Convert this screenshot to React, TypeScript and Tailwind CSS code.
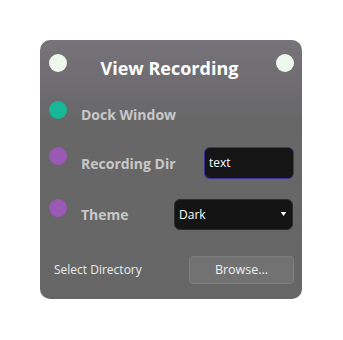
import React from 'react';

const font = { fontFamily: '"Open Sans", "Noto Sans", sans-serif' };

const Dot: React.FC<{ color: string }> = ({ color }) => (
  <div className={`w-[18px] h-[18px] rounded-full shrink-0 ${color}`} />
);

const App: React.FC = () => {
  return (
    <div className="w-[343px] h-[340px] bg-white pt-[40px] pl-[40px]" style={font}>
      <div className="w-[262px] h-[259px] rounded-[10px] bg-[linear-gradient(to_bottom,#76737a_0%,#686768_30%,#666666_100%)] pt-[14px] pl-[9px] pr-[8px] flex flex-col">
        {/* Header */}
        <div className="flex items-start">
          <Dot color="bg-[#eef8ec]" />
          <h1 className="flex-1 text-center text-white font-bold text-[18px] leading-[28px] pr-[4px]">View Recording</h1>
          <Dot color="bg-[#eef8ec]" />
        </div>

        {/* Dock window */}
        <div className="mt-[19px] h-[28px] flex items-start">
          <Dot color="bg-[#17b897]" />
          <span className="ml-[14px] mt-[5px] text-[14px] leading-[18px] font-bold text-[#c8c8c8]">Dock Window</span>
        </div>

        {/* Recording dir */}
        <div className="mt-[18px] h-[32px] flex items-start">
          <Dot color="bg-[#9b59b6]" />
          <span className="ml-[14px] mt-[8px] text-[14px] leading-[18px] font-bold text-[#c8c8c8] flex-1">Recording Dir</span>
          <div className="w-[90px] h-[32px] rounded-[6px] bg-[#151515] border border-[#34349a] flex items-center pl-[4px] text-white text-[12px]">
            text
          </div>
        </div>

        {/* Theme */}
        <div className="mt-[20px] h-[31px] flex items-start">
          <Dot color="bg-[#9b59b6]" />
          <span className="ml-[14px] mt-[7px] text-[14px] leading-[18px] font-bold text-[#c8c8c8] flex-1">Theme</span>
          <div className="w-[119px] h-[31px] mr-[1px] rounded-[6px] bg-[#141414] border border-[#2c2c2c] flex items-center justify-between pl-[4px] pr-[6px] text-white text-[12px]">
            <span>Dark</span>
            <svg width="5" height="5" viewBox="0 0 5 5">
              <rect x="0" y="0" width="5" height="1" fill="#fff" />
              <polygon points="0.5,1 4.5,1 2.5,4" fill="#fff" />
            </svg>
          </div>
        </div>

        {/* Select directory */}
        <div className="mt-[26px] flex items-center pl-[5px]">
          <span className="flex-1 text-[12px] text-[#ececec]">Select Directory</span>
          <button className="w-[105px] h-[28px] rounded-[4px] bg-[#727272] border border-[#7e7e7e] text-[12.5px] text-[#efefef]">
            Browse...
          </button>
        </div>
      </div>
    </div>
  );
};

export default App;
